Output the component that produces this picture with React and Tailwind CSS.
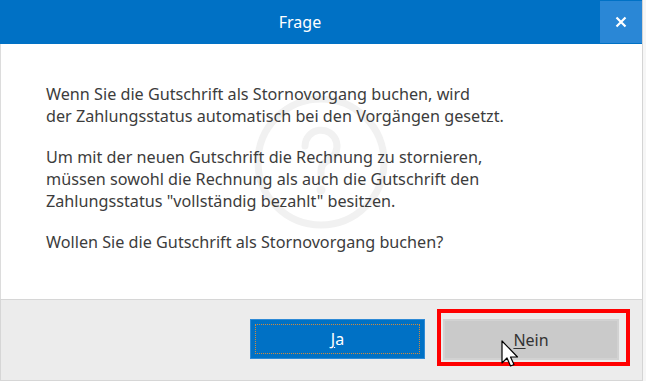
export default function App() {
  return (
    <div
      className="relative flex w-[646px] h-[381px] bg-[#f6f6f6] overflow-hidden"
      style={{ fontFamily: '"Noto Sans", "Open Sans", sans-serif' }}
    >
      <div className="flex flex-col w-[643px] h-[381px] border-r border-[#d4d4d4]">
        {/* title bar */}
        <div className="flex h-[44px] bg-[#0071c5]">
          <div className="flex-1 flex items-center justify-center text-white text-[16px]">
            Frage
          </div>
          <button className="w-[42px] h-[42px] mt-[1px] bg-[#2a87d6] flex items-center justify-center">
            <svg width="12" height="12" viewBox="0 0 12 12">
              <path d="M1.5 1.5 L10.5 10.5 M10.5 1.5 L1.5 10.5" stroke="white" strokeWidth="2.2" />
            </svg>
          </button>
        </div>

        {/* message */}
        <div className="relative flex-1 bg-white border-l border-[#dcdcdc] pl-[45px] pt-[39px] text-[16.2px] leading-[22px] text-[#3c3c3c]">
          <svg className="absolute left-[252px] top-[50px]" width="136" height="136" viewBox="0 0 136 136">
            <circle cx="68" cy="68" r="63" fill="none" stroke="#f1f1f1" strokeWidth="7" />
            <path d="M52 52 a16 16 0 1 1 22 15 q-6 3 -6 10 v6" fill="none" stroke="#f1f1f1" strokeWidth="7" strokeLinecap="round" />
            <circle cx="68" cy="96" r="4.5" fill="#f1f1f1" />
          </svg>
          <div className="relative flex flex-col gap-[19px]">
            <p>
              Wenn Sie die Gutschrift als Stornovorgang buchen, wird
              <br />
              der Zahlungsstatus automatisch bei den Vorgängen gesetzt.
            </p>
            <p>
              Um mit der neuen Gutschrift die Rechnung zu stornieren,
              <br />
              müssen sowohl die Rechnung als auch die Gutschrift den
              <br />
              Zahlungsstatus "vollständig bezahlt" besitzen.
            </p>
            <p>Wollen Sie die Gutschrift als Stornovorgang buchen?</p>
          </div>
        </div>

        {/* buttons */}
        <div className="flex justify-end gap-[18px] h-[82px] pt-[19px] pr-[23px] bg-[#ececec] border-t border-b border-[#d6d6d6] border-l">
          <button className="w-[175px] h-[40px] bg-[#0071c5] border border-[#2e8ad6] p-[4px]">
            <div className="w-full h-full border border-dotted border-[#d08a3c] flex items-center justify-center text-white text-[16px]">
              <span>
                <span className="underline underline-offset-2">J</span>a
              </span>
            </div>
          </button>
          <button className="w-[176px] h-[41px] bg-[#cacaca] border-2 border-[#d2d2d2] flex items-center justify-center text-[#333] text-[16px]">
            <span>
              <span className="underline underline-offset-2">N</span>ein
            </span>
          </button>
        </div>
      </div>

      {/* red highlight */}
      <div className="absolute left-[437px] top-[309px] w-[193px] h-[57px] border-[4px] border-[#ff0000]" />

      {/* mouse cursor */}
      <svg className="absolute left-[501px] top-[340px]" width="22" height="32" viewBox="0 0 22 32">
        <path
          d="M1 1 L1 23 L6 18 L9.5 26 L13 24.5 L9.5 17 L16.5 17 Z"
          fill="white"
          stroke="black"
          strokeWidth="1.2"
          strokeLinejoin="round"
        />
      </svg>
    </div>
  );
}
